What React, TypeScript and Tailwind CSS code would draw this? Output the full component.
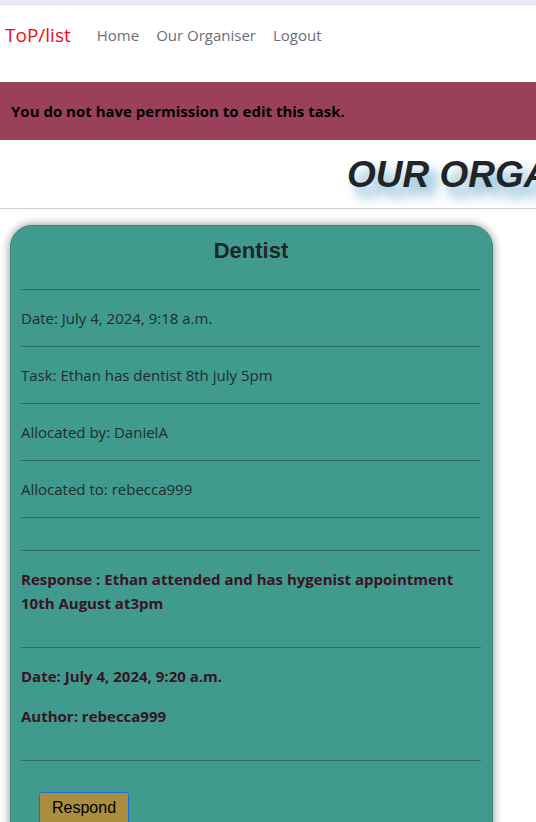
import React from "react";

const body = { fontFamily: '"Open Sans", "Noto Sans", sans-serif' };
const arial = { fontFamily: '"Liberation Sans", Arial, sans-serif' };

function Row({ children }: { children: React.ReactNode }) {
  return (
    <>
      <div className="h-px bg-[#2f6f66]" />
      <p className="py-4 text-[15px] leading-6 text-[#1f2e2a]">{children}</p>
    </>
  );
}

export default function App() {
  return (
    <div className="min-h-[822px] w-[536px] overflow-hidden bg-white" style={body}>
      <div className="h-[5px] border-b border-[#d9dde5] bg-[#e9ecf2]" />
      <nav className="flex h-[77px] items-start bg-white pt-[18px]">
        <span className="ml-[5px] text-[19px] leading-6 text-[#f00c14]" style={body}>ToP/list</span>
        <div className="ml-[26px] flex gap-[17px] text-[15px] leading-6 text-[#6b6e78]">
          <span>Home</span>
          <span>Our Organiser</span>
          <span>Logout</span>
        </div>
      </nav>
      <div className="flex h-[58px] items-center bg-[#9b405a] pl-[11px]">
        <span className="text-[15px] font-bold text-black">You do not have permission to edit this task.</span>
      </div>
      <div className="flex h-[69px] items-center overflow-hidden whitespace-nowrap border-b border-[#cfcfcf] pl-[347px]">
        <h1
          className="text-[37px] font-bold italic leading-none text-[#212529]"
          style={{ ...arial, textShadow: "8px 10px 12px rgba(70,150,190,0.8)" }}
        >
          OUR ORGANISER
        </h1>
      </div>
      <div className="pl-[10px] pt-[16px]">
        <div className="w-[483px] rounded-t-[22px] border border-[#3a877c] bg-[#409a8e] pl-[10px] pr-[11px] pt-[12px] pb-10 shadow-[0_0_10px_rgba(0,0,0,0.45)]">
          <h2 className="text-center text-[22px] font-bold leading-[26px] text-[#212529]" style={arial}>
            Dentist
          </h2>
          <div className="mt-[25px]">
            <Row>Date: July 4, 2024, 9:18 a.m.</Row>
            <Row>Task: Ethan has dentist 8th july 5pm</Row>
            <Row>Allocated by: DanielA</Row>
            <Row>Allocated to: rebecca999</Row>
            <div className="h-px bg-[#2f6f66]" />
            <div className="h-[32px]" />
            <div className="h-px bg-[#2f6f66]" />
            <p className="py-4 text-[15px] font-bold leading-6 text-[#3a1422]">
              Response : Ethan attended and has hygenist appointment 10th August at3pm
            </p>
            <div className="h-4" />
            <div className="h-px bg-[#2f6f66]" />
            <div className="pt-4 text-[15px] font-bold leading-6 text-[#3a1422]">
              <p>Date: July 4, 2024, 9:20 a.m.</p>
              <p className="mt-4">Author: rebecca999</p>
            </div>
            <div className="h-8" />
            <div className="h-px bg-[#2f6f66]" />
            <div className="pl-[18px] pt-[31px]">
              <button
                className="rounded-[3px] border border-[#1a6fe0] bg-[#ab8d3f] px-[12px] py-[4px] text-[16px] leading-[22px] text-black"
                style={arial}
              >
                Respond
              </button>
            </div>
          </div>
        </div>
      </div>
    </div>
  );
}
